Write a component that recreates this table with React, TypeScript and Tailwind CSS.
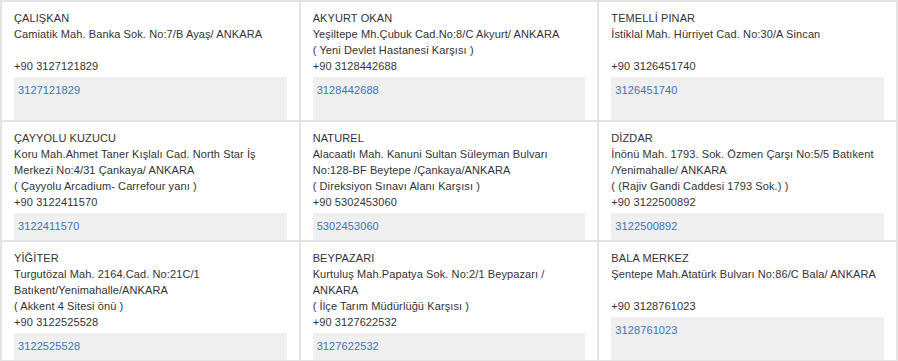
type Branch = {
  name: string;
  address: string;
  landmark?: string;
  phone: string;
};

const branches: Branch[] = [
  {
    name: "ÇALIŞKAN",
    address: "Camiatik Mah. Banka Sok. No:7/B Ayaş/ ANKARA",
    phone: "3127121829",
  },
  {
    name: "AKYURT OKAN",
    address: "Yeşiltepe Mh.Çubuk Cad.No:8/C Akyurt/ ANKARA",
    landmark: "( Yeni Devlet Hastanesi Karşısı )",
    phone: "3128442688",
  },
  {
    name: "TEMELLİ PINAR",
    address: "İstiklal Mah. Hürriyet Cad. No:30/A Sincan",
    phone: "3126451740",
  },
  {
    name: "ÇAYYOLU KUZUCU",
    address: "Koru Mah.Ahmet Taner Kışlalı Cad. North Star İş Merkezi No:4/31 Çankaya/ ANKARA",
    landmark: "( Çayyolu Arcadium- Carrefour yanı )",
    phone: "3122411570",
  },
  {
    name: "NATUREL",
    address: "Alacaatlı Mah. Kanuni Sultan Süleyman Bulvarı No:128-BF Beytepe /Çankaya/ANKARA",
    landmark: "( Direksiyon Sınavı Alanı Karşısı )",
    phone: "5302453060",
  },
  {
    name: "DİZDAR",
    address: "İnönü Mah. 1793. Sok. Özmen Çarşı No:5/5 Batıkent /Yenimahalle/ ANKARA",
    landmark: "( (Rajiv Gandi Caddesi 1793 Sok.) )",
    phone: "3122500892",
  },
  {
    name: "YİĞİTER",
    address: "Turgutözal Mah. 2164.Cad. No:21C/1 Batıkent/Yenimahalle/ANKARA",
    landmark: "( Akkent 4 Sitesi önü )",
    phone: "3122525528",
  },
  {
    name: "BEYPAZARI",
    address: "Kurtuluş Mah.Papatya Sok. No:2/1 Beypazarı / ANKARA",
    landmark: "( İlçe Tarım Müdürlüğü Karşısı )",
    phone: "3127622532",
  },
  {
    name: "BALA MERKEZ",
    address: "Şentepe Mah.Atatürk Bulvarı No:86/C Bala/ ANKARA",
    phone: "3128761023",
  },
];

function BranchCard({ branch }: { branch: Branch }) {
  return (
    <div className="flex min-h-[118px] flex-col bg-white px-3 pt-2 text-[#333]">
      <div>{branch.name}</div>
      <div>{branch.address}</div>
      <div className="h-4">{branch.landmark}</div>
      <div>+90 {branch.phone}</div>
      <div className="mt-[3px] flex-1 bg-[#efefef] px-1 pb-1 pt-[5px]">
        <a href="#" className="text-[#3d74b5]">
          {branch.phone}
        </a>
      </div>
    </div>
  );
}

function App() {
  return (
    <div className="min-h-screen bg-white">
      <div
        className="grid grid-cols-3 gap-[2px] border-2 border-[#e4e4e4] bg-[#e4e4e4] text-[11px] leading-4 tracking-[0.1px]"
        style={{ fontFamily: '"Liberation Sans", Arial, sans-serif' }}
      >
        {branches.map((b) => (
          <BranchCard key={b.name} branch={b} />
        ))}
      </div>
    </div>
  );
}

export default App;
